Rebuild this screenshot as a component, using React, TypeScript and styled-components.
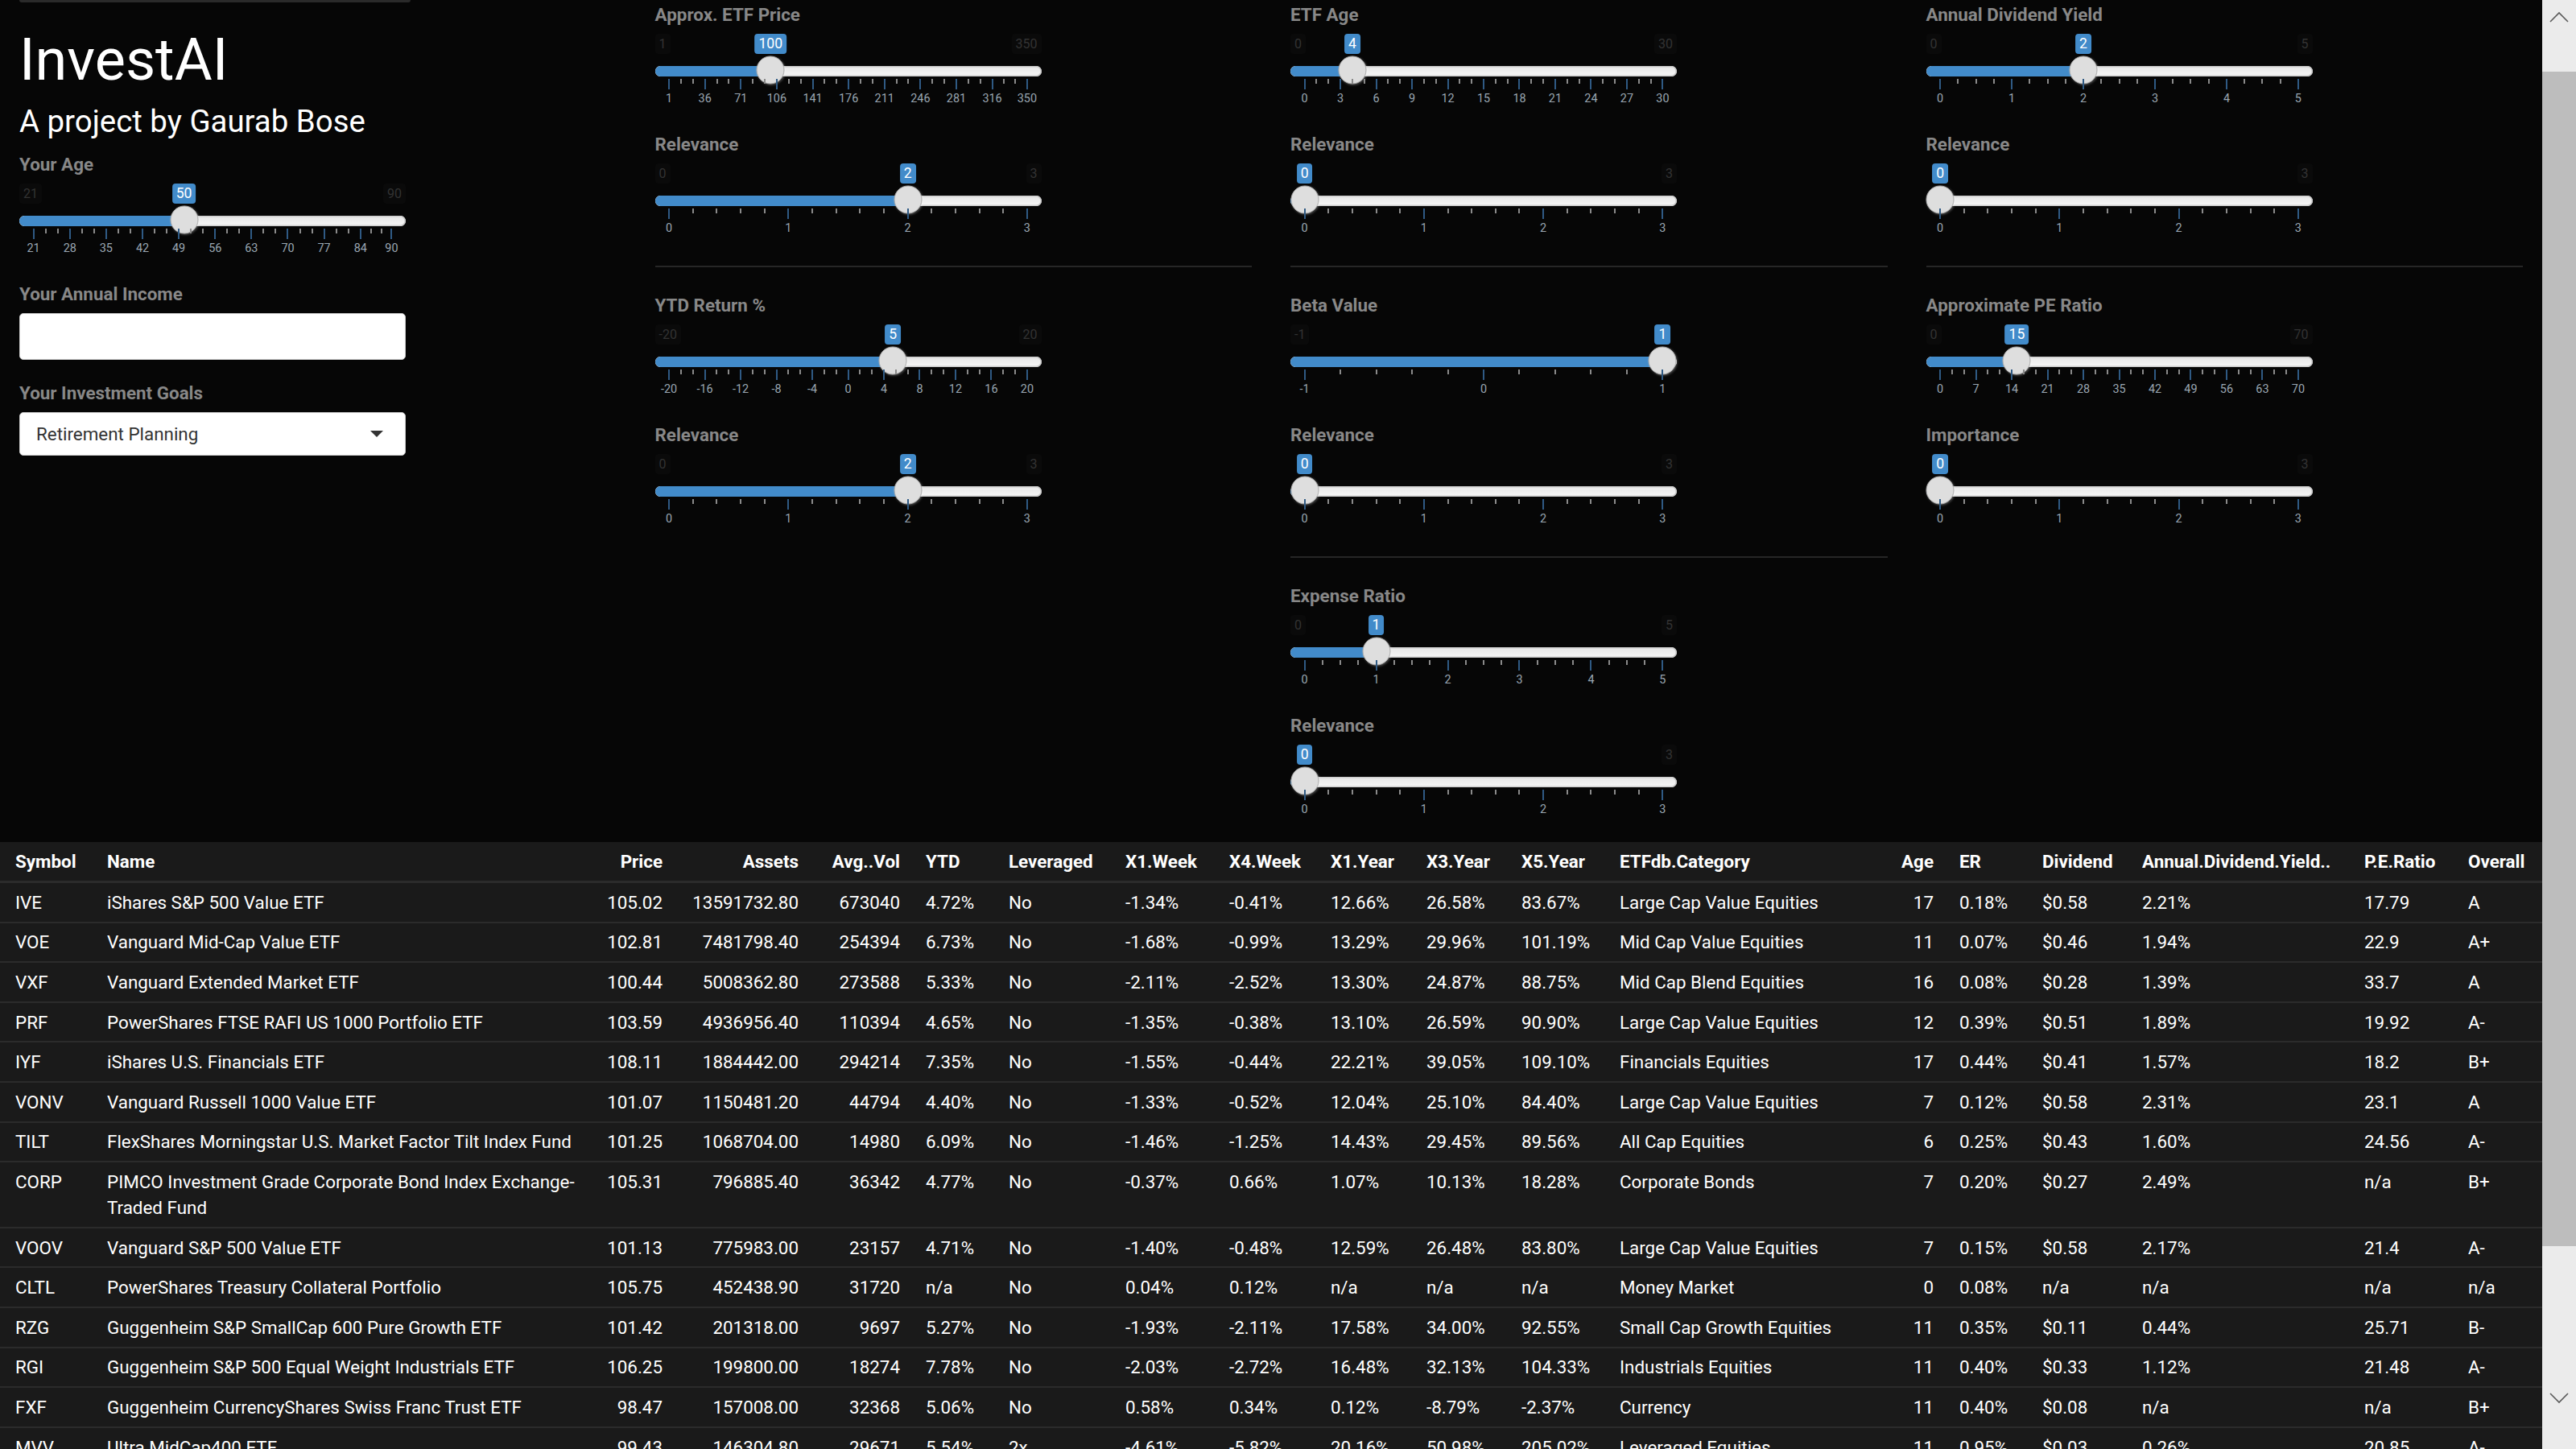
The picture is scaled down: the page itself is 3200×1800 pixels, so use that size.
import React from "react";
import styled, { createGlobalStyle } from "styled-components";

const GlobalStyle = createGlobalStyle`
  html, body {
    margin: 0;
    padding: 0;
    background: #060606;
    overflow: hidden;
  }
  body {
    font-family: Roboto, "Liberation Sans", Arial, sans-serif;
    color: #888888;
    font-size: 22.4px;
  }
  * { box-sizing: border-box; }
`;

/* ---------- page frame ---------- */

const Page = styled.div`
  display: flex;
  width: 3200px;
  height: 1800px;
  overflow: hidden;
  background: #060606;
`;

const Main = styled.main`
  flex: 1 1 auto;
  min-width: 0;
  height: 1800px;
  overflow: hidden;
`;

const ControlsRow = styled.div`
  display: grid;
  grid-template-columns: repeat(4, 1fr);
  align-items: start;
`;

const Column = styled.section<{ $top: number }>`
  display: flex;
  flex-direction: column;
  align-items: flex-start;
  padding: ${(p) => p.$top}px 24px 0;
`;

const TopEdge = styled.div`
  width: 486px;
  height: 3px;
  background: #2a2a2a;
  border-radius: 0 0 4px 4px;
`;

const Title = styled.h1`
  margin: 33px 0 0;
  font-size: 72px;
  line-height: 78px;
  font-weight: 400;
  color: #ffffff;
`;

const Subtitle = styled.h3`
  margin: 16px 0 16px;
  font-size: 38.4px;
  line-height: 42px;
  font-weight: 400;
  color: #ffffff;
`;

const FormGroup = styled.div`
  display: flex;
  flex-direction: column;
  margin-bottom: 25px;
  width: 480px;
`;

const Label = styled.label`
  display: block;
  font-size: 22.4px;
  line-height: 32px;
  font-weight: 700;
  color: #888888;
  margin-bottom: 8px;
  white-space: nowrap;
`;

const Divider = styled.hr`
  align-self: stretch;
  margin: 6px 0 31px;
  border: 0;
  border-top: 2px solid #262626;
  height: 0;
`;

const TextBox = styled.input`
  width: 480px;
  height: 58px;
  border: 1.6px solid #cccccc;
  border-radius: 5px;
  background: #ffffff;
  padding: 9px 19px;
  font-family: inherit;
  font-size: 22.4px;
  outline: none;
`;

const SelectBox = styled.div`
  display: flex;
  align-items: center;
  justify-content: space-between;
  width: 480px;
  height: 54px;
  border: 1.6px solid #cccccc;
  border-radius: 5px;
  background: #ffffff;
  padding: 0 27px 0 20px;
  color: #333333;
  font-size: 22.4px;
`;

const Caret = styled.span`
  width: 0;
  height: 0;
  border-style: solid;
  border-width: 8px 8px 0 8px;
  border-color: #333333 transparent transparent transparent;
`;

/* ---------- slider ---------- */

const SLIDER_W = 480;
const PAD = 17.6;
const USABLE = SLIDER_W - PAD * 2;

const SliderBox = styled.div`
  position: relative;
  width: ${SLIDER_W}px;
  height: 96px;
`;

const EdgeRow = styled.div`
  display: flex;
  justify-content: space-between;
  height: 25px;
`;

const EdgeLabel = styled.span<{ $hide: boolean }>`
  visibility: ${(p) => (p.$hide ? "hidden" : "visible")};
  font-size: 16px;
  line-height: 21px;
  padding: 2px 5px;
  color: #333333;
  background: rgba(255, 255, 255, 0.02);
  border-radius: 4px;
`;

const Bubble = styled.span`
  position: absolute;
  top: 0;
  transform: translateX(-50%);
  font-size: 17.6px;
  line-height: 23px;
  padding: 1px 5px;
  color: #ffffff;
  background: #428bca;
  border-radius: 4px;
  white-space: nowrap;
`;

const Track = styled.div`
  position: relative;
  margin-top: 15px;
  height: 13px;
  border-radius: 7px;
  background: linear-gradient(to bottom, #dedede -50%, #ffffff 150%);
  box-shadow: inset 0 0 0 1.6px #cccccc;
`;

const Fill = styled.div`
  position: absolute;
  left: 0;
  top: 0;
  bottom: 0;
  background: #428bca;
  border-radius: 7px 0 0 7px;
`;

const Handle = styled.div`
  position: absolute;
  top: 50%;
  width: 35px;
  height: 35px;
  margin-top: -1.5px;
  transform: translate(-50%, -50%);
  border-radius: 50%;
  border: 1.6px solid #ababab;
  background: #dedede;
  box-shadow: 1px 1px 3px rgba(255, 255, 255, 0.3);
`;

const Grid = styled.div`
  position: relative;
  margin: 3px ${PAD}px 0;
  height: 40px;
`;

const Tick = styled.span<{ $big: boolean }>`
  position: absolute;
  top: 0;
  width: 2px;
  margin-left: -1px;
  height: ${(p) => (p.$big ? 13 : 6)}px;
  background: ${(p) => (p.$big ? "#2f5a84" : "#8a8a8a")};
`;

const TickText = styled.span`
  position: absolute;
  top: 16px;
  transform: translateX(-50%);
  font-size: 14.4px;
  line-height: 18px;
  color: #9aa6b2;
  white-space: nowrap;
`;

type SliderSpec = {
  label: string;
  min: number;
  max: number;
  value: number;
  ticks: number[];
};

function smallCount(intervals: number) {
  if (intervals > 28) return 0;
  if (intervals > 14) return 1;
  if (intervals > 7) return 2;
  if (intervals > 4) return 3;
  return 4;
}

function Slider({ min, max, value, ticks }: SliderSpec) {
  const frac = (v: number) => (v - min) / (max - min);
  const center = PAD + frac(value) * USABLE;
  const n = ticks.length - 1;
  const sm = smallCount(n);
  const marks: { pct: number; big: boolean; text?: number }[] = [];
  ticks.forEach((t, i) => {
    if (i > 0) {
      const a = frac(ticks[i - 1]);
      const b = frac(t);
      for (let z = 1; z <= sm; z++) {
        marks.push({ pct: (a + ((b - a) * z) / (sm + 1)) * 100, big: false });
      }
    }
    marks.push({ pct: frac(t) * 100, big: true, text: t });
  });
  return (
    <SliderBox>
      <EdgeRow>
        <EdgeLabel $hide={value === min}>{min}</EdgeLabel>
        <EdgeLabel $hide={value === max}>{max}</EdgeLabel>
      </EdgeRow>
      <Bubble style={{ left: center }}>{value}</Bubble>
      <Track>
        <Fill style={{ width: center }} />
        <Handle style={{ left: center }} />
      </Track>
      <Grid>
        {marks.map((m, i) => (
          <Tick key={`t${i}`} $big={m.big} style={{ left: `${m.pct}%` }} />
        ))}
        {marks
          .filter((m) => m.text !== undefined)
          .map((m, i) => (
            <TickText key={`x${i}`} style={{ left: `${m.pct}%` }}>
              {m.text}
            </TickText>
          ))}
      </Grid>
    </SliderBox>
  );
}

function SliderGroup(props: SliderSpec) {
  return (
    <FormGroup>
      <Label>{props.label}</Label>
      <Slider {...props} />
    </FormGroup>
  );
}

const range = (a: number, b: number, step: number) => {
  const out: number[] = [];
  for (let v = a; v <= b; v += step) out.push(v);
  return out;
};

const rel = (label: string, value: number): SliderSpec => ({
  label,
  min: 0,
  max: 3,
  value,
  ticks: [0, 1, 2, 3],
});

/* ---------- table ---------- */

const TableWrap = styled.div`
  width: 3158px;
`;

const DataTable = styled.table`
  width: 3158px;
  table-layout: fixed;
  border-collapse: collapse;
  background: #1a1a1a;
  color: #ffffff;
  font-size: 22.4px;
  line-height: 32px;
`;

const ColW = styled.col<{ $w: number }>`
  width: ${(p) => p.$w}px;
`;

const HeadCell = styled.th<{ $right: boolean }>`
  padding: 8px 16px;
  text-align: ${(p) => (p.$right ? "right" : "left")};
  font-weight: 700;
  white-space: nowrap;
  overflow: hidden;
  border-bottom: 3px solid #2b2b2b;
  &:first-child {
    padding-left: 19px;
  }
`;

const BodyRow = styled.tr`
  border-bottom: 2px solid #2b2b2b;
`;

const Cell = styled.td<{ $right: boolean }>`
  padding: 7.8px 16px;
  vertical-align: top;
  text-align: ${(p) => (p.$right ? "right" : "left")};
  font-weight: 400;
  &:first-child {
    padding-left: 19px;
  }
`;

const columns: { name: string; w: number; right?: boolean }[] = [
  { name: "Symbol", w: 117 },
  { name: "Name", w: 617 },
  { name: "Price", w: 105, right: true },
  { name: "Assets", w: 169, right: true },
  { name: "Avg..Vol", w: 126, right: true },
  { name: "YTD", w: 103 },
  { name: "Leveraged", w: 145 },
  { name: "X1.Week", w: 129 },
  { name: "X4.Week", w: 126 },
  { name: "X1.Year", w: 119 },
  { name: "X3.Year", w: 118 },
  { name: "X5.Year", w: 122 },
  { name: "ETFdb.Category", w: 344 },
  { name: "Age", w: 78, right: true },
  { name: "ER", w: 103 },
  { name: "Dividend", w: 124 },
  { name: "Annual.Dividend.Yield..", w: 276 },
  { name: "P.E.Ratio", w: 129 },
  { name: "Overall", w: 108 },
];

const rows: string[][] = [
  ["IVE", "iShares S&P 500 Value ETF", "105.02", "13591732.80", "673040", "4.72%", "No", "-1.34%", "-0.41%", "12.66%", "26.58%", "83.67%", "Large Cap Value Equities", "17", "0.18%", "$0.58", "2.21%", "17.79", "A"],
  ["VOE", "Vanguard Mid-Cap Value ETF", "102.81", "7481798.40", "254394", "6.73%", "No", "-1.68%", "-0.99%", "13.29%", "29.96%", "101.19%", "Mid Cap Value Equities", "11", "0.07%", "$0.46", "1.94%", "22.9", "A+"],
  ["VXF", "Vanguard Extended Market ETF", "100.44", "5008362.80", "273588", "5.33%", "No", "-2.11%", "-2.52%", "13.30%", "24.87%", "88.75%", "Mid Cap Blend Equities", "16", "0.08%", "$0.28", "1.39%", "33.7", "A"],
  ["PRF", "PowerShares FTSE RAFI US 1000 Portfolio ETF", "103.59", "4936956.40", "110394", "4.65%", "No", "-1.35%", "-0.38%", "13.10%", "26.59%", "90.90%", "Large Cap Value Equities", "12", "0.39%", "$0.51", "1.89%", "19.92", "A-"],
  ["IYF", "iShares U.S. Financials ETF", "108.11", "1884442.00", "294214", "7.35%", "No", "-1.55%", "-0.44%", "22.21%", "39.05%", "109.10%", "Financials Equities", "17", "0.44%", "$0.41", "1.57%", "18.2", "B+"],
  ["VONV", "Vanguard Russell 1000 Value ETF", "101.07", "1150481.20", "44794", "4.40%", "No", "-1.33%", "-0.52%", "12.04%", "25.10%", "84.40%", "Large Cap Value Equities", "7", "0.12%", "$0.58", "2.31%", "23.1", "A"],
  ["TILT", "FlexShares Morningstar U.S. Market Factor Tilt Index Fund", "101.25", "1068704.00", "14980", "6.09%", "No", "-1.46%", "-1.25%", "14.43%", "29.45%", "89.56%", "All Cap Equities", "6", "0.25%", "$0.43", "1.60%", "24.56", "A-"],
  ["CORP", "PIMCO Investment Grade Corporate Bond Index Exchange-Traded Fund", "105.31", "796885.40", "36342", "4.77%", "No", "-0.37%", "0.66%", "1.07%", "10.13%", "18.28%", "Corporate Bonds", "7", "0.20%", "$0.27", "2.49%", "n/a", "B+"],
  ["VOOV", "Vanguard S&P 500 Value ETF", "101.13", "775983.00", "23157", "4.71%", "No", "-1.40%", "-0.48%", "12.59%", "26.48%", "83.80%", "Large Cap Value Equities", "7", "0.15%", "$0.58", "2.17%", "21.4", "A-"],
  ["CLTL", "PowerShares Treasury Collateral Portfolio", "105.75", "452438.90", "31720", "n/a", "No", "0.04%", "0.12%", "n/a", "n/a", "n/a", "Money Market", "0", "0.08%", "n/a", "n/a", "n/a", "n/a"],
  ["RZG", "Guggenheim S&P SmallCap 600 Pure Growth ETF", "101.42", "201318.00", "9697", "5.27%", "No", "-1.93%", "-2.11%", "17.58%", "34.00%", "92.55%", "Small Cap Growth Equities", "11", "0.35%", "$0.11", "0.44%", "25.71", "B-"],
  ["RGI", "Guggenheim S&P 500 Equal Weight Industrials ETF", "106.25", "199800.00", "18274", "7.78%", "No", "-2.03%", "-2.72%", "16.48%", "32.13%", "104.33%", "Industrials Equities", "11", "0.40%", "$0.33", "1.12%", "21.48", "A-"],
  ["FXF", "Guggenheim CurrencyShares Swiss Franc Trust ETF", "98.47", "157008.00", "32368", "5.06%", "No", "0.58%", "0.34%", "0.12%", "-8.79%", "-2.37%", "Currency", "11", "0.40%", "$0.08", "n/a", "n/a", "B+"],
  ["MVV", "Ultra MidCap400 ETF", "99.43", "146304.80", "29671", "5.54%", "2x", "-4.61%", "-5.82%", "20.16%", "50.98%", "205.02%", "Leveraged Equities", "11", "0.95%", "$0.03", "0.26%", "20.85", "A-"],
];

/* ---------- scrollbar ---------- */

const ScrollBar = styled.div`
  flex: 0 0 42px;
  width: 42px;
  height: 1800px;
  display: flex;
  flex-direction: column;
  background: #ebebeb;
`;

const ScrollButton = styled.div`
  flex: 0 0 42px;
  display: flex;
  align-items: center;
  justify-content: center;
`;

const ScrollGap = styled.div<{ $h: number }>`
  flex: 0 0 ${(p) => p.$h}px;
`;

const ScrollThumb = styled.div`
  flex: 0 0 1459px;
  background: #bdbdbd;
`;

const Chevron = ({ up }: { up: boolean }) => (
  <svg width="26" height="16" viewBox="0 0 26 16">
    <polyline
      points={up ? "2,14 13,3 24,14" : "2,2 13,13 24,2"}
      fill="none"
      stroke="#5a5a5a"
      strokeWidth="1.6"
    />
  </svg>
);

/* ---------- app ---------- */

export default function App() {
  return (
    <>
      <GlobalStyle />
      <Page>
        <Main>
          <ControlsRow>
            <Column $top={0}>
              <TopEdge />
              <Title>InvestAI</Title>
              <Subtitle>A project by Gaurab Bose</Subtitle>
              <SliderGroup
                label="Your Age"
                min={21}
                max={90}
                value={50}
                ticks={[21, 28, 35, 42, 49, 56, 63, 70, 77, 84, 90]}
              />
              <FormGroup>
                <Label>Your Annual Income</Label>
                <TextBox type="text" defaultValue="" />
              </FormGroup>
              <FormGroup>
                <Label>Your Investment Goals</Label>
                <SelectBox>
                  <span>Retirement Planning</span>
                  <Caret />
                </SelectBox>
              </FormGroup>
            </Column>

            <Column $top={2}>
              <SliderGroup
                label="Approx. ETF Price"
                min={1}
                max={350}
                value={100}
                ticks={[1, 36, 71, 106, 141, 176, 211, 246, 281, 316, 350]}
              />
              <SliderGroup {...rel("Relevance", 2)} />
              <Divider />
              <SliderGroup
                label="YTD Return %"
                min={-20}
                max={20}
                value={5}
                ticks={range(-20, 20, 4)}
              />
              <SliderGroup {...rel("Relevance", 2)} />
            </Column>

            <Column $top={2}>
              <SliderGroup label="ETF Age" min={0} max={30} value={4} ticks={range(0, 30, 3)} />
              <SliderGroup {...rel("Relevance", 0)} />
              <Divider />
              <SliderGroup label="Beta Value" min={-1} max={1} value={1} ticks={[-1, 0, 1]} />
              <SliderGroup {...rel("Relevance", 0)} />
              <Divider />
              <SliderGroup label="Expense Ratio" min={0} max={5} value={1} ticks={range(0, 5, 1)} />
              <SliderGroup {...rel("Relevance", 0)} />
            </Column>

            <Column $top={2}>
              <SliderGroup
                label="Annual Dividend Yield"
                min={0}
                max={5}
                value={2}
                ticks={range(0, 5, 1)}
              />
              <SliderGroup {...rel("Relevance", 0)} />
              <Divider />
              <SliderGroup
                label="Approximate PE Ratio"
                min={0}
                max={70}
                value={15}
                ticks={range(0, 70, 7)}
              />
              <SliderGroup {...rel("Importance", 0)} />
            </Column>
          </ControlsRow>

          <TableWrap>
            <DataTable>
              <colgroup>
                {columns.map((c) => (
                  <ColW key={c.name} $w={c.w} />
                ))}
              </colgroup>
              <thead>
                <tr>
                  {columns.map((c) => (
                    <HeadCell key={c.name} $right={!!c.right}>
                      {c.name}
                    </HeadCell>
                  ))}
                </tr>
              </thead>
              <tbody>
                {rows.map((r) => (
                  <BodyRow key={r[0]}>
                    {r.map((v, i) => (
                      <Cell key={i} $right={!!columns[i].right}>
                        {v}
                      </Cell>
                    ))}
                  </BodyRow>
                ))}
              </tbody>
            </DataTable>
          </TableWrap>
        </Main>

        <ScrollBar>
          <ScrollButton>
            <Chevron up />
          </ScrollButton>
          <ScrollGap $h={47} />
          <ScrollThumb />
          <ScrollGap $h={168} />
          <ScrollButton>
            <Chevron up={false} />
          </ScrollButton>
        </ScrollBar>
      </Page>
    </>
  );
}
